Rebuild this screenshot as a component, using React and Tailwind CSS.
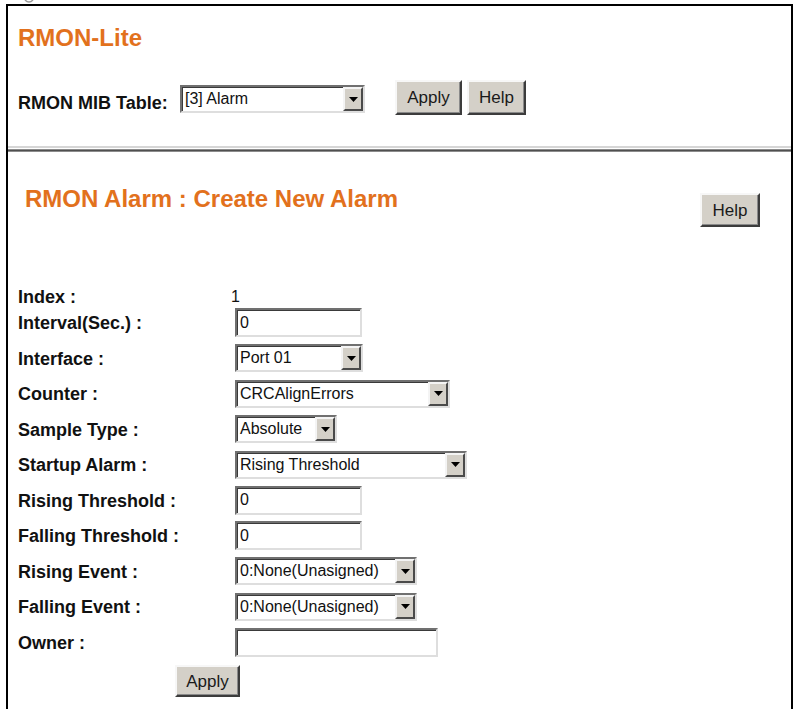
import React from 'react';

const btn =
  'flex items-center justify-center bg-[#d4d0c8] border-2 border-t-[#f7f7f7] border-l-[#f7f7f7] border-r-[#3c3c3c] border-b-[#3c3c3c] shadow-[inset_-1px_-1px_0_#8a8a8a] text-[17px] leading-none text-[#1a1a1a]';

const inset =
  'border-2 border-t-[#707070] border-l-[#707070] border-r-[#dedede] border-b-[#dedede] bg-white shadow-[inset_1px_1px_0_#3a3a3a]';

function Arrow() {
  return (
    <span className="flex w-[20px] items-center justify-center border-2 border-t-[#f4f4f4] border-l-[#f4f4f4] border-r-[#4a4a4a] border-b-[#4a4a4a] bg-[#d4d0c8]">
      <svg width="9" height="5" viewBox="0 0 9 5">
        <path d="M0 0h9L4.5 5z" fill="#000" />
      </svg>
    </span>
  );
}

function Select({ value, className }) {
  return (
    <div className={`flex h-[28px] items-stretch ${inset} ${className}`}>
      <span className="flex flex-1 items-center overflow-hidden whitespace-nowrap pl-[3px] text-[16px] text-[#111]">{value}</span>
      <Arrow />
    </div>
  );
}

function TextBox({ value, className }) {
  return (
    <div className={`flex h-[29px] items-center pl-[3px] text-[16px] text-[#111] ${inset} ${className}`}>{value}</div>
  );
}

const filas = [
  { label: 'Interval(Sec.) :', input: <TextBox value="0" className="w-[127px]" /> },
  { label: 'Interface :', input: <Select value="Port 01" className="w-[128px]" /> },
  { label: 'Counter :', input: <Select value="CRCAlignErrors" className="w-[215px]" /> },
  { label: 'Sample Type :', input: <Select value="Absolute" className="w-[102px]" /> },
  { label: 'Startup Alarm :', input: <Select value="Rising Threshold" className="w-[232px]" /> },
  { label: 'Rising Threshold :', input: <TextBox value="0" className="w-[127px]" /> },
  { label: 'Falling Threshold :', input: <TextBox value="0" className="w-[127px]" /> },
  { label: 'Rising Event :', input: <Select value="0:None(Unasigned)" className="w-[182px]" /> },
  { label: 'Falling Event :', input: <Select value="0:None(Unasigned)" className="w-[182px]" /> },
  { label: 'Owner :', input: <TextBox value="" className="w-[203px]" /> },
];

export default function App() {
  return (
    <div className="min-h-screen bg-white font-['Liberation_Sans',Arial,sans-serif] text-[#111]">
      <div className="h-[4px] overflow-hidden">
        <svg className="ml-[24px]" width="10" height="4" viewBox="0 0 10 4">
          <path d="M1 0 Q5 4 9 0" stroke="#9a9a9a" strokeWidth="1.5" fill="none" />
        </svg>
      </div>

      <div className="ml-[6px] min-h-[705px] w-[787px] border-2 border-b-0 border-black">
        {/* RMON-Lite */}
        <div className="pl-[10px] pt-[18px]">
          <h1 className="text-[24px] font-bold leading-[28px] text-[#e2711d]">RMON-Lite</h1>
          <div className="mt-[28px] flex items-start">
            <span className="mt-[12px] w-[162px] text-[18px] font-bold leading-[22px]">RMON MIB Table:</span>
            <Select value="[3] Alarm" className="mt-[5px] w-[185px]" />
            <div className={`ml-[30px] h-[35px] w-[67px] ${btn}`}>Apply</div>
            <div className={`ml-[5px] h-[35px] w-[59px] ${btn}`}>Help</div>
          </div>
        </div>

        <div className="mt-[31px]">
          <div className="h-[2px] bg-[#d6d6d6]" />
          <div className="h-px bg-white" />
          <div className="h-px bg-[#8c8c8c]" />
          <div className="h-px bg-[#505050]" />
          <div className="h-px bg-[#8c8c8c]" />
        </div>

        {/* Create New Alarm */}
        <div className="mt-[33px] flex items-start justify-between pl-[17px] pr-[31px]">
          <h2 className="text-[24px] font-bold leading-[28px] text-[#e2711d]">RMON Alarm : Create New Alarm</h2>
          <div className={`mt-[8px] h-[34px] w-[60px] ${btn}`}>Help</div>
        </div>

        <div className="mt-[59px] pl-[10px]">
          <div className="flex h-[22px] items-center">
            <span className="w-[213px] text-[18px] font-bold leading-[22px]">Index :</span>
            <span className="text-[16px]">1</span>
          </div>
          {filas.map((f, i) => (
            <div key={f.label} className={`flex h-[29px] items-center ${i === 0 ? '' : 'mt-[6.5px]'}`}>
              <span className="w-[217px] pt-[1px] text-[18px] font-bold leading-[22px]">{f.label}</span>
              {f.input}
            </div>
          ))}
          <div className={`ml-[157px] mt-[8.5px] h-[32px] w-[65px] ${btn}`}>Apply</div>
        </div>
      </div>
    </div>
  );
}
